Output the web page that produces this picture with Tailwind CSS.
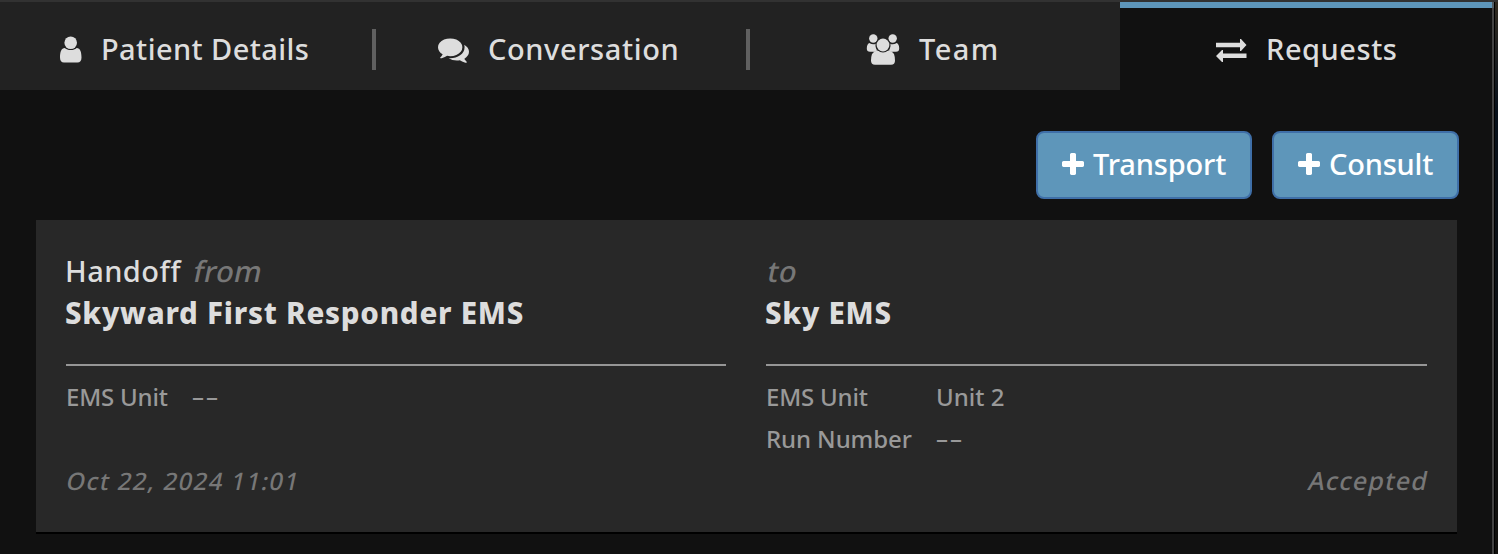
<!DOCTYPE html>
<html lang="en">
<head>
<meta charset="utf-8">
<title>Requests</title>
<script src="https://cdn.jsdelivr.net/npm/@tailwindcss/browser@4"></script>
</head>
<body class="bg-[#111111] font-['Noto_Sans',sans-serif] text-[#dddddd]">
<div class="relative flex h-[554px] w-[1498px] flex-col overflow-hidden border-t-2 border-[#323232]">
  <nav class="flex h-[88px] w-[1494px] text-[29px] leading-[40px] font-medium">
    <div class="flex w-[376px] items-center bg-[#222222] pt-[7px]">
      <svg class="ml-[60px] h-[27px] w-[22px] shrink-0" viewBox="0 0 22 27" fill="currentColor"><path d="M4.800 12C1.300 12 0 16 0 21.500C0 25 1.500 26.500 4 26.500H17.500C20 26.500 21.500 25 21.500 21.500C21.500 16 20.200 12 16.700 12C13.200 14.700 8.300 14.700 4.800 12Z"/><circle cx="10.700" cy="6.700" r="7.300" fill="#222222"/><circle cx="10.700" cy="6.700" r="6.300"/></svg>
      <span class="ml-[19px] w-[210px] pb-[2px] whitespace-nowrap tracking-[0.420px]">Patient Details</span>
      <span class="ml-auto h-[41px] w-1 bg-[#606060]"></span>
    </div>
    <div class="flex w-[374px] items-center bg-[#222222] pt-[7px]">
      <svg class="ml-[62px] h-[31px] w-[31px] shrink-0" viewBox="0 0 1792 1792" fill="currentColor"><path d="M1408 768q0 139-94 257t-256.500 186.500-353.500 68.500q-86 0-176-16-124 88-278 128-36 9-86 16h-3q-11 0-20.500-8t-11.500-21q-1-3-1-6.500t.5-6.500 2-6l2.500-5 3.500-5.500 4-5 4.500-5 4-4.500q5-6 23-25t26-29.500 22.500-29 25-38.500 20.500-44q-124-72-195-177t-71-224q0-139 94-257t256.500-186.500 353.500-68.500 353.500 68.500 256.500 186.500 94 257zm384 256q0 120-71 224.500t-195 176.500q10 24 20.500 44t25 38.500 22.500 29 26 29.500 23 25q1 1 4 4.500t4.500 5 4 5 3.500 5.500l2.500 5 2 6 .5 6.500-1 6.500q-3 14-13 22t-22 7q-50-7-86-16-154-40-278-128-90 16-176 16-271 0-472-132 58 4 88 4 161 0 309-45t264-129q125-92 192-212t67-254q0-77-23-152 129 71 204 178t75 230z"/></svg>
      <span class="ml-[19px] w-[193px] pb-[2px] whitespace-nowrap tracking-[0.600px]">Conversation</span>
      <span class="ml-auto h-[41px] w-1 bg-[#606060]"></span>
    </div>
    <div class="flex w-[370px] items-center bg-[#222222] pt-[7px]">
      <svg class="ml-[116px] h-[31px] w-[34px] shrink-0" viewBox="0 0 34 31" fill="currentColor"><circle cx="7.300" cy="4.500" r="4.200"/><circle cx="26.700" cy="4.500" r="4.200"/><path d="M3.300 9Q7 11.200 9.800 9.700Q8.800 13.500 11 16.500L9 17.700H4Q.8 17.700 .8 14.500Q.8 10 3.300 9ZM30.700 9Q27 11.200 24.200 9.700Q25.200 13.500 23 16.500L25 17.700H30Q33.200 17.700 33.200 14.500Q33.200 10 30.700 9Z"/><path d="M11 16.500H23Q29 17.500 29 26.500Q29 30.700 25 30.700H9Q5 30.700 5 26.500Q5 17.500 11 16.500Z"/><circle cx="17" cy="11" r="7.400" fill="#222222"/><circle cx="17" cy="11" r="6.400"/></svg>
      <span class="ml-[19px] pb-[2px] whitespace-nowrap tracking-[1.400px]">Team</span>
    </div>
    <div class="flex w-[374px] items-center border-t-6 border-[#5e96ba] pt-[3px]">
      <svg class="ml-[96px] h-[23px] w-[31px] shrink-0" viewBox="0 0 31 23" fill="currentColor"><path d="M0 3.800H24V0H25L30.500 6L25 12H24V8.200H0ZM30.500 14.600H7V11H6L0 17L6 23H7V19H30.500Z"/></svg>
      <span class="ml-[19px] pb-[4px] whitespace-nowrap tracking-[0.550px]">Requests</span>
    </div>
  </nav>
  <div class="mt-[41px] flex gap-5 pl-[1036px] text-[29px] font-medium text-white">
    <button class="flex h-[68px] w-[216px] items-center rounded-lg border-2 border-[#3f6fa8] bg-[#5e96ba] pb-[2px] pl-6"><svg class="h-[22px] w-[22px]" viewBox="192 128 1408 1408" fill="currentColor"><path d="M1600 736v192q0 40-28 68t-68 28h-416v416q0 40-28 68t-68 28h-192q-40 0-68-28t-28-68v-416h-416q-40 0-68-28t-28-68v-192q0-40 28-68t68-28h416v-416q0-40 28-68t68-28h192q40 0 68 28t28 68v416h416q40 0 68 28t28 68z"/></svg><span class="ml-[9px] tracking-[-0.150px]">Transport</span></button>
    <button class="flex h-[68px] w-[187px] items-center rounded-lg border-2 border-[#3f6fa8] bg-[#5e96ba] pb-[2px] pl-6"><svg class="h-[22px] w-[22px]" viewBox="192 128 1408 1408" fill="currentColor"><path d="M1600 736v192q0 40-28 68t-68 28h-416v416q0 40-28 68t-68 28h-192q-40 0-68-28t-28-68v-416h-416q-40 0-68-28t-28-68v-192q0-40 28-68t68-28h416v-416q0-40 28-68t68-28h192q40 0 68 28t28 68v416h416q40 0 68 28t28 68z"/></svg><span class="ml-[9px] tracking-[-0.200px]">Consult</span></button>
  </div>
  <section class="mt-[21px] ml-9 flex h-[314px] w-[1421px] shrink-0 flex-col border-b-2 border-black bg-[#282828] px-[30px] pt-[30px]">
    <div class="grid grid-cols-[660px_661px] gap-10">
      <div>
        <div class="h-[116px] border-b-2 border-[#969696] text-[29px] leading-[42px] whitespace-nowrap"><p class="flex gap-[10px] font-medium"><span class="-ml-px w-[119px] tracking-[0.450px]">Handoff</span><span class="-skew-x-12 tracking-[0.400px] text-[#777777]">from</span></p><p class="-ml-px text-[29.500px] font-extrabold tracking-[0.740px]">Skyward First Responder EMS</p></div>
        <div class="mt-[10px] flex text-2xl leading-[42px] font-medium tracking-[-0.200px] text-[#999999]"><span class="w-[126px]">EMS Unit</span><span class="-mt-px tracking-[2px]">––</span></div>
      </div>
      <div>
        <div class="h-[116px] border-b-2 border-[#969696] text-[29px] leading-[42px] whitespace-nowrap"><p class="flex font-medium"><span class="ml-[2px] -skew-x-12 tracking-[0.500px] text-[#777777]">to</span></p><p class="-ml-px text-[29.500px] font-extrabold tracking-[0.740px]">Sky EMS</p></div>
        <div class="mt-[10px] grid grid-cols-[170px_1fr] text-2xl leading-[42px] font-medium text-[#999999]"><span class="tracking-[-0.200px]">EMS Unit</span><span>Unit 2</span><span class="tracking-[-0.100px]">Run Number</span><span class="-mt-px tracking-[2px]">––</span></div>
      </div>
    </div>
    <div class="flex justify-between text-2xl leading-[42px] font-medium text-[#777777]"><span class="ml-px -skew-x-12 tracking-[1.350px]">Oct 22, 2024 11:01</span><span class="-mt-px -mr-[2px] -skew-x-12 text-[25px] tracking-[1.200px]">Accepted</span></div>
  </section>
  <div class="absolute top-0 right-0 flex h-full w-[6px]"><span class="w-[2px] bg-[#505050]/80"></span><span class="w-px bg-black"></span><span class="w-[3px] bg-linear-to-b from-[#302a20] via-[#07101a] via-20% to-[#11100d]"></span></div>
</div>
</body>
</html>
